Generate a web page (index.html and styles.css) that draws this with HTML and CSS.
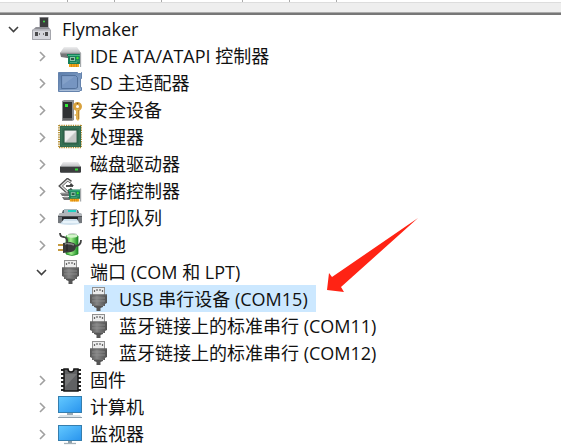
FILE: index.html
```html
<!DOCTYPE html>
<html lang="zh-CN">
<head>
<meta charset="utf-8">
<title>设备管理器</title>
<link rel="stylesheet" href="styles.css">
</head>
<body>
<svg class="defs" aria-hidden="true">
  <defs>
    <linearGradient id="screen" x1="0" y1="0" x2="1" y2="1"><stop offset="0" stop-color="#62c8ff"/><stop offset="1" stop-color="#2a95ee"/></linearGradient>
    <linearGradient id="metal" x1="0" y1="0" x2="0" y2="1"><stop offset="0" stop-color="#eeeeef"/><stop offset="1" stop-color="#b9babd"/></linearGradient>
    <linearGradient id="plug" x1="0" y1="0" x2="1" y2="0"><stop offset="0" stop-color="#555"/><stop offset=".4" stop-color="#858585"/><stop offset="1" stop-color="#505050"/></linearGradient>
    <linearGradient id="cell" x1="0" y1="0" x2="1" y2="0"><stop offset="0" stop-color="#2fa52f"/><stop offset=".4" stop-color="#a5ef8f"/><stop offset="1" stop-color="#168a20"/></linearGradient>
    <linearGradient id="blue" x1="0" y1="0" x2="1" y2="1"><stop offset="0" stop-color="#5b7dab"/><stop offset="1" stop-color="#8faace"/></linearGradient>
  </defs>
  <symbol id="open" viewBox="0 0 12 12"><path d="M1 4l4.500 4.500L10 4" fill="none" stroke="#404040" stroke-width="1.600"/></symbol>
  <symbol id="closed" viewBox="0 0 12 12"><path d="M4 2l4.500 4.500L4 11" fill="none" stroke="#a0a0a0" stroke-width="1.600"/></symbol>
  <symbol id="card" viewBox="0 0 15 14">
    <path d="M2 10h10v4H2z" fill="#f2a51c"/><path d="M4.500 11v3M7 11v3M9.500 11v3" stroke="#c9780b" stroke-width=".7"/>
    <path d="M0 1h13v10H1V3H0z" fill="#16805a"/><path d="M1 2h12v1H1z" fill="#49b588"/>
    <path d="M3 4h5v4H3z" fill="#8fc4a8"/><path d="M4 5h3v2H4z" fill="#2b5946"/><circle cx="10.500" cy="5" r="1.200" fill="#45e52b"/>
    <path d="M3 9.500h7M9 8h3" stroke="#5bae88" stroke-width=".8"/><path d="M13.500 0v14" stroke="#a5a9ab" stroke-width="1.300"/>
  </symbol>
  <symbol id="pc" viewBox="0 0 24 25">
    <path d="M9 1h10v11H9z" fill="#c5c5ca"/><path d="M10 1.500h8V12h-8z" fill="#3c3d3e"/><circle cx="14" cy="5.500" r="1" fill="#42e04b"/>
    <path d="M6 11h12l3 3v10H2V14z" fill="#bfc0c8"/><path d="M6 11h12l2 2H4z" fill="#8f9096"/><path d="M2.500 14h18v9.500h-18z" fill="#d5d6dc" stroke="#a5a6ac"/>
    <path d="M5 16h3v4H5zM15 16h3v4h-3z" fill="#4b4b4d"/><path d="M9 17h1v2H9zM13 17h1v2h-1z" fill="#777"/>
  </symbol>
  <symbol id="ide" viewBox="0 0 24 25">
    <path d="M6 4h13l4 6H2z" fill="url(#metal)"/><path d="M2 10h21v5q-11 1-20-1z" fill="#747577"/><path d="M2 10h21" stroke="#a8a9ab"/>
    <use href="#card" x="9" y="10" width="15" height="14"/>
  </symbol>
  <symbol id="sd" viewBox="0 0 24 25">
    <path d="M.5 2.500h19l1 1h2l1-1v6h-1v9h1v3h-2v1H.5z" fill="url(#blue)" stroke="#6583ad"/>
    <path d="M3.500 5.500h14l2 2v10l-2 1h-14z" fill="#7695c1" stroke="#53719b"/><path d="M4.500 6.500h12L4.500 15z" fill="#8aa6cc" opacity=".65"/><path d="M1.500 20.500h20" stroke="#a8bcd7"/>
  </symbol>
  <symbol id="security" viewBox="0 0 24 25">
    <path d="M4 4l2-1h10v20l-2 1H4z" fill="#8d8e90"/><path d="M5 5h9v18H5z" fill="#303234"/><path d="M7 7h3v3H7z" fill="#2fea36"/><path d="M5 22h9" stroke="#9a9a9a"/>
    <circle cx="19.500" cy="9.500" r="3" fill="none" stroke="#d9a23e" stroke-width="3"/><circle cx="19.500" cy="6.500" r=".8" fill="#7b5517"/>
    <path d="M18 12h3.500v10L20 24l-2-2v-3l-2-1 2-1z" fill="#e2b14f"/><path d="M20.500 13v9" stroke="#b98634"/>
  </symbol>
  <symbol id="cpu" viewBox="0 0 24 25">
    <path d="M1 1.500h23M1 23.500h23" stroke="#b18a2c" stroke-width="1.500" stroke-dasharray="1.300 1"/><path d="M1 1v23M24 1v23" stroke="#b18a2c" stroke-width="1.800" stroke-dasharray="1.300 1"/>
    <path d="M2 2h21v21H2z" fill="#326b50"/><path d="M3.500 3.500h18v18h-18z" fill="none" stroke="#3b7558"/>
    <path d="M6 6h13v13H6z" fill="#d5d7d6" stroke="#2a5943"/><path d="M7 7h11L7 18z" fill="#eeeeee"/><path d="M18 8v10H8z" fill="#c5c7c6"/>
  </symbol>
  <symbol id="disk" viewBox="0 0 24 25">
    <path d="M5 11h15l3 5H2z" fill="url(#metal)"/><path d="M2 15.500h21V21l-1 1H3l-1-1z" fill="#3b3d3e"/><path d="M2 15.500h21" stroke="#929496"/><path d="M17 18.500h3" stroke="#32db3a" stroke-width="2"/><path d="M3 21.500h19" stroke="#66686a"/>
  </symbol>
  <symbol id="storage" viewBox="0 0 24 25">
    <path d="M13 4L9.500 1.500 2.500 8l7 6.500L14 11" fill="none" stroke="#505050" stroke-width="3.200"/><path d="M12.500 4l-3-2-6.500 6 6.500 6" fill="none" stroke="#e0e0e0" stroke-width="1.300"/>
    <path d="M8 8h7" stroke="#404040" stroke-width="1.800"/><path d="M11 8l2-3 3 3z" fill="#404040"/>
    <path d="M2 15h9v3H4zM4 19h8v3H6z" fill="#707173"/><path d="M3 15h7M6 19h4" stroke="#b8b8b8"/>
    <use href="#card" x="10" y="10" width="14" height="14"/>
  </symbol>
  <symbol id="printer" viewBox="0 0 24 25">
    <path d="M5 5h15l2 5H3z" fill="#5e666c"/><path d="M6 4h13v4H6z" fill="#a9b9c0"/><path d="M10 5h8v2h-8z" fill="#1fd0c0"/>
    <path d="M2 8h21l1 3v7q-12 2-24 0v-7z" fill="#74787d"/><path d="M2 8h21l1 3H0z" fill="#b2b6ba"/><path d="M0 11.500h24" stroke="#4d5156"/>
    <path d="M4 12h16v4H4z" fill="#24272b"/><path d="M6 14h13l3 5q-10 2-20 0z" fill="#d1e2ee"/><path d="M5 17h15" stroke="#e8f3fa" stroke-width="2"/>
  </symbol>
  <symbol id="battery" viewBox="0 0 24 25">
    <path d="M10 2q5-2 9 0v2h-9z" fill="#c5cac5"/><path d="M8 4q6-3 12 0v18q-6 3-12 0z" fill="url(#cell)" stroke="#268b2c" stroke-width=".8"/><ellipse cx="14" cy="4" rx="5.500" ry="1.700" fill="#d3f5ca"/>
    <path d="M2 1q0 4 4 4 4 1 3 6M18 14q5-1 5-6" fill="none" stroke="#414241" stroke-width="1.800"/>
    <path d="M0 13h6M0 18h6" stroke="#c49a40" stroke-width="2"/><path d="M5 11l7-1q6 1 6 4 0 5-5 6l-8 1z" fill="#3a3b3b"/><path d="M7 12q5-1 9 1" fill="none" stroke="#888" stroke-width="1.500"/><path d="M9 12v7" stroke="#202020"/>
  </symbol>
  <symbol id="port" viewBox="0 0 24 25">
    <path d="M6 1h13v9H6z" fill="#909090"/><path d="M7 2h11v7H7z" fill="#ececec"/><path d="M8.500 4v2M11 3v2M14 3v2M16.500 4v2" stroke="#666" stroke-width="1.200"/>
    <path d="M4 8.500h17V17l-2 1v2H6v-2l-2-1z" fill="url(#plug)"/><path d="M4 9h17" stroke="#666"/><path d="M6 12h13M6 15h13" stroke="#929292" stroke-width=".8"/>
    <path d="M8 20h9v1l-2.500 1v3h-4v-3L8 21z" fill="#555"/><path d="M7 19.500h11" stroke="#707070"/>
  </symbol>
  <symbol id="firmware" viewBox="0 0 24 25">
    <path d="M3 3h3M3 7h3M3 11h3M3 15h3M3 19h3M3 23h3M20 3h3M20 7h3M20 11h3M20 15h3M20 19h3M20 23h3" stroke="#242424" stroke-width="2"/>
    <path d="M6 2h4q0 3 3 3t3-3h4v22H6z" fill="#606163" stroke="#171717" stroke-width="1.500"/><path d="M7 7h12L7 20z" fill="#858687" opacity=".6"/>
  </symbol>
  <symbol id="computer" viewBox="0 0 24 25">
    <path d="M0 2h24v17H0z" fill="#357eae"/><path d="M1 3h22v15H1z" fill="url(#screen)"/><path d="M9 19h6v2H9z" fill="#9cabb5"/><path d="M2 21h20l2 3H0z" fill="#dce4e9"/><path d="M0 23.500h24" stroke="#8fa0ab"/>
  </symbol>
  <symbol id="monitor" viewBox="0 0 24 25">
    <path d="M0 4h24v16H0z" fill="#357eae"/><path d="M1 5h22v14H1z" fill="url(#screen)"/><path d="M10 20h4v2h-4z" fill="#8fa0a9"/><path d="M6 22.500h12" stroke="#a4b1b8" stroke-width="1.300"/>
  </symbol>
</svg>

<header class="toolbar">
  <div class="ticks"><i></i><i></i><i></i><i class="wide"></i><i></i><i></i></div>
</header>
<main>
  <ul class="tree">
    <li>
      <div class="row"><button class="toggle" aria-label="折叠"><svg><use href="#open"/></svg></button><button class="item"><svg class="icon"><use href="#pc"/></svg><span>Flymaker</span></button></div>
      <ul>
        <li><div class="row"><button class="toggle" aria-label="展开"><svg><use href="#closed"/></svg></button><button class="item"><svg class="icon"><use href="#ide"/></svg><span>IDE ATA/ATAPI 控制器</span></button></div></li>
        <li><div class="row"><button class="toggle" aria-label="展开"><svg><use href="#closed"/></svg></button><button class="item"><svg class="icon"><use href="#sd"/></svg><span>SD 主适配器</span></button></div></li>
        <li><div class="row"><button class="toggle" aria-label="展开"><svg><use href="#closed"/></svg></button><button class="item"><svg class="icon"><use href="#security"/></svg><span>安全设备</span></button></div></li>
        <li><div class="row"><button class="toggle" aria-label="展开"><svg><use href="#closed"/></svg></button><button class="item"><svg class="icon"><use href="#cpu"/></svg><span>处理器</span></button></div></li>
        <li><div class="row"><button class="toggle" aria-label="展开"><svg><use href="#closed"/></svg></button><button class="item"><svg class="icon"><use href="#disk"/></svg><span>磁盘驱动器</span></button></div></li>
        <li><div class="row"><button class="toggle" aria-label="展开"><svg><use href="#closed"/></svg></button><button class="item"><svg class="icon"><use href="#storage"/></svg><span>存储控制器</span></button></div></li>
        <li><div class="row"><button class="toggle" aria-label="展开"><svg><use href="#closed"/></svg></button><button class="item"><svg class="icon"><use href="#printer"/></svg><span>打印队列</span></button></div></li>
        <li><div class="row"><button class="toggle" aria-label="展开"><svg><use href="#closed"/></svg></button><button class="item"><svg class="icon"><use href="#battery"/></svg><span>电池</span></button></div></li>
        <li>
          <div class="row"><button class="toggle" aria-label="折叠"><svg><use href="#open"/></svg></button><button class="item"><svg class="icon"><use href="#port"/></svg><span>端口 (COM 和 LPT)</span></button></div>
          <ul class="leaves">
            <li><div class="row"><button class="item selected"><svg class="icon"><use href="#port"/></svg><span>USB 串行设备 (COM15)</span><svg class="arrow" viewBox="0 0 91 75" aria-hidden="true"><path d="M91 0L14 69l3 5L0 72l2-17 3 4z" fill="#ff2314"/></svg></button></div></li>
            <li><div class="row"><button class="item"><svg class="icon"><use href="#port"/></svg><span>蓝牙链接上的标准串行 (COM11)</span></button></div></li>
            <li><div class="row"><button class="item"><svg class="icon"><use href="#port"/></svg><span>蓝牙链接上的标准串行 (COM12)</span></button></div></li>
          </ul>
        </li>
        <li><div class="row"><button class="toggle" aria-label="展开"><svg><use href="#closed"/></svg></button><button class="item"><svg class="icon"><use href="#firmware"/></svg><span>固件</span></button></div></li>
        <li><div class="row"><button class="toggle" aria-label="展开"><svg><use href="#closed"/></svg></button><button class="item"><svg class="icon"><use href="#computer"/></svg><span>计算机</span></button></div></li>
        <li><div class="row"><button class="toggle" aria-label="展开"><svg><use href="#closed"/></svg></button><button class="item"><svg class="icon"><use href="#monitor"/></svg><span>监视器</span></button></div></li>
      </ul>
    </li>
  </ul>
</main>
</body>
</html>
```
FILE: styles.css
```css
* { box-sizing: border-box; }

body {
  margin: 0;
  background: #fff;
  color: #111;
  font: 18px/24px "Open Sans", "Noto Sans CJK SC", sans-serif;
}

.defs { position: absolute; width: 0; height: 0; }

.toolbar {
  height: 15px;
  background: #eee;
  border-bottom: 2px solid #777;
  box-shadow: inset 0 -1px #aaa;
}

.ticks {
  display: flex;
  gap: 46px;
  height: 3px;
  padding-left: 67px;
  background: #fff;
  border-bottom: 1px solid #ddd;
}

.ticks i { width: 1px; background: #aaa; }
.ticks .wide { margin-left: 34px; }

ul { margin: 0; padding: 0; list-style: none; }
.tree ul { padding-left: 28px; }
.tree .leaves { padding-left: 56px; }

.row { display: flex; height: 27px; }

button {
  border: 0;
  padding: 0;
  background: none;
  color: inherit;
  font: inherit;
}

.toggle {
  display: flex;
  align-items: center;
  justify-content: center;
  width: 28px;
}

.toggle svg { width: 12px; height: 12px; }

.item {
  position: relative;
  display: flex;
  align-items: center;
  gap: 8px;
  padding: 0 8px 0 2px;
  white-space: nowrap;
}

.icon { width: 24px; height: 25px; flex: none; }

.leaves .item { gap: 9px; }

.selected { background: #cce8ff; }

.arrow {
  position: absolute;
  left: calc(100% + 11px);
  bottom: 19px;
  width: 91px;
  height: 75px;
}
```
